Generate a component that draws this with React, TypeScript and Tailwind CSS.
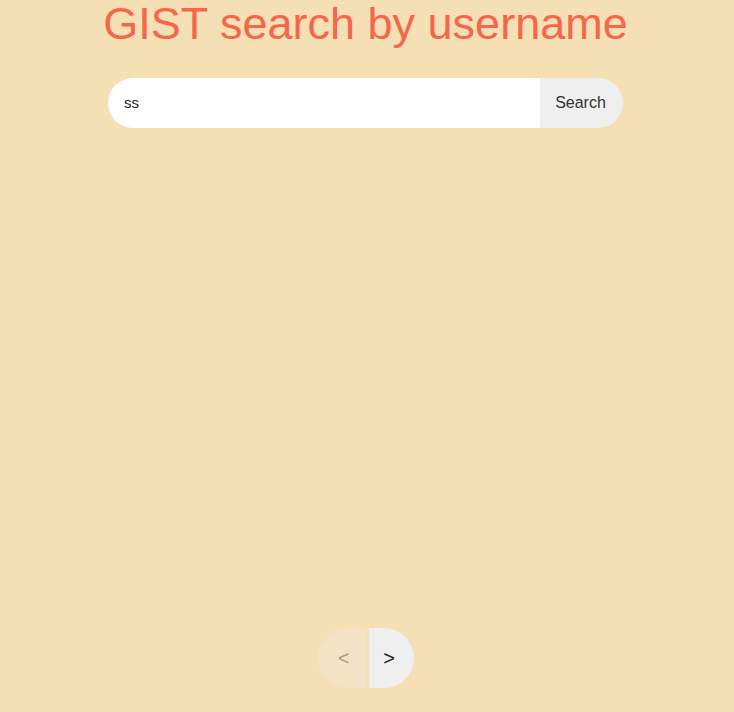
import { useState } from "react";

export default function App() {
  const [query, setQuery] = useState("ss");

  return (
    <div className="flex min-h-screen flex-col items-center bg-[#f5dfb5] pr-[3px] font-['Liberation_Sans',Arial,sans-serif]">
      <h1 className="pt-[1px] text-[45px] leading-[46px] text-[#f4674b]">GIST search by username</h1>

      <form
        className="mt-[31px] flex h-[50px] w-[515px] overflow-hidden rounded-full"
        onSubmit={(e) => e.preventDefault()}
      >
        <input
          value={query}
          onChange={(e) => setQuery(e.target.value)}
          className="min-w-0 flex-1 bg-white pl-[16px] text-[15px] text-[#222] outline-none"
        />
        <button type="submit" className="w-[83px] bg-[#efefef] pr-[2px] text-[16px] text-[#333]">
          Search
        </button>
      </form>

      <div className="flex-1" />

      <div className="mb-[24px] flex h-[60px] gap-[3px] overflow-hidden">
        <button disabled className="w-[48px] rounded-l-full bg-[#f3e2c6] pl-[4px] text-[20px] text-[#a89c8a]">
          &lt;
        </button>
        <button className="w-[45px] rounded-r-full bg-[#efefef] pr-[4px] text-[20px] text-[#222]">
          &gt;
        </button>
      </div>
    </div>
  );
}
